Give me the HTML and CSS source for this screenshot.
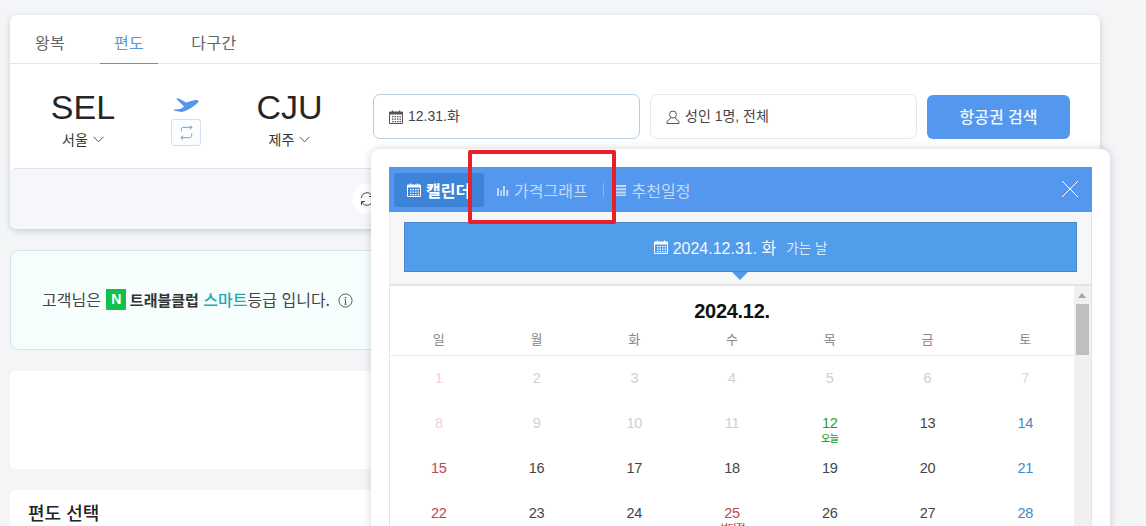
FILE: index.html
```html
<!DOCTYPE html>
<html lang="ko">
<head>
<meta charset="utf-8">
<title>항공권 검색</title>
<link rel="stylesheet" href="styles.css">
</head>
<body>
<svg class="defs" width="0" height="0" aria-hidden="true">
  <symbol id="cal" viewBox="0 0 14 14">
    <path d="M3.500 0.500v2M10.500 0.500v2" fill="none" stroke="currentColor" stroke-width="1.200"/>
    <path d="M0.500 2h13v11.500h-13z" fill="none" stroke="currentColor"/>
    <path d="M1 2h12v2.500H1z" fill="currentColor"/>
    <path d="M3 6h1.500v1.200H3zM5.500 6H7v1.200H5.500zM8 6h1.500v1.200H8zM10.500 6H12v1.200h-1.500zM3 8.500h1.500v1.200H3zM5.500 8.500H7v1.200H5.500zM8 8.500h1.500v1.200H8zM10.500 8.500H12v1.200h-1.500zM3 11h1.500v1.200H3zM5.500 11H7v1.200H5.500zM8 11h1.500v1.200H8zM10.500 11H12v1.200h-1.500z" fill="currentColor"/>
  </symbol>
  <symbol id="chev" viewBox="0 0 11 7">
    <path d="M0.500 0.800L5.500 5.800L10.500 0.800" fill="none" stroke="currentColor"/>
  </symbol>
</svg>

<main class="page">
  <section class="search-card">
    <nav class="tabs">
      <span class="tab">왕복</span>
      <span class="tab tab-active">편도</span>
      <span class="tab tab-multi">다구간</span>
    </nav>
    <div class="search-row">
      <div class="city city-from">
        <div class="code">SEL</div>
        <div class="city-name">서울 <svg class="chev"><use href="#chev"/></svg></div>
      </div>
      <div class="route">
        <svg class="plane" viewBox="0 0 26 15" width="26" height="15"><path d="M3 0.500L6 0.500L13 4.500L22 2C25 1.500 26.500 3 25 4.500C21 8.500 14 13 8.500 14L0.500 12.500L1.500 11.500L7.500 11L11 8.500z" fill="#5595ec"/></svg>
        <div class="swap">
          <svg viewBox="0 0 18 16" width="17" height="15"><path d="M3.500 7V4.500C3.500 3 4.500 2.500 6 2.500H15M12.500 0.500L15 2.500L12.500 4.500M14.500 9V11.500C14.500 13 13.500 13.500 12 13.500H3M5.500 11.500L3 13.500L5.500 15.500" fill="none" stroke="#5f9fe0" stroke-width="1"/></svg>
        </div>
      </div>
      <div class="city city-to">
        <div class="code">CJU</div>
        <div class="city-name">제주 <svg class="chev"><use href="#chev"/></svg></div>
      </div>
      <div class="field field-date"><svg class="field-icon"><use href="#cal"/></svg><span class="field-text">12.31.화</span></div>
      <div class="field field-pax">
        <svg class="field-icon" viewBox="0 0 14 14"><circle cx="7" cy="4.500" r="3.500" fill="none" stroke="currentColor"/><path d="M5 8L1 11.500V13.500H13V11.500L9 8" fill="none" stroke="currentColor"/></svg>
        <span class="field-text">성인 1명, 전체</span>
      </div>
      <div class="search-btn"><span class="field-text">항공권 검색</span></div>
    </div>
    <div class="search-foot">
      <span class="reset">
        <svg viewBox="0 0 16 16" width="16" height="16"><path d="M2.500 7A5.500 5.500 0 0 1 13 5M13.500 9A5.500 5.500 0 0 1 3 11M13.500 2v3.500H10M2.500 14v-3.500H6" fill="none" stroke="#444" stroke-width="1"/></svg>
      </span>
    </div>
  </section>

  <section class="grade">
    <p class="grade-text">고객님은 <span class="n-badge">N</span> <b class="club">트래블클럽</b> <b class="smart">스마트</b>등급 입니다.</p>
    <svg class="info" viewBox="0 0 16 16" width="15" height="15"><circle cx="8" cy="8" r="7" fill="none" stroke="#555"/><path d="M8 7v5M6.800 12h2.400M7 7h1" fill="none" stroke="#555"/><circle cx="8" cy="4.800" r="0.900" fill="#555"/></svg>
  </section>

  <section class="blank-card"></section>

  <section class="select-card">
    <h2 class="select-title">편도 선택</h2>
  </section>
</main>

<aside class="popup">
  <div class="popup-inner">
    <header class="popup-head">
      <span class="ptab ptab-active"><svg class="ptab-icon"><use href="#cal"/></svg>캘린더</span>
      <span class="ptab ptab-graph">
        <svg class="ptab-icon-sm" viewBox="0 0 12 12"><path d="M0 4h2v8H0zM3.300 6.500h1.700V12H3.300zM6 2h2v10H6zM9.300 6h2v6h-2z" fill="currentColor"/></svg>가격그래프
      </span>
      <span class="sep"></span>
      <span class="ptab ptab-plan">
        <svg class="ptab-icon-sm" viewBox="0 0 12 12"><path d="M0 1h11v2H0zM0 4.300h11v2H0zM0 7.600h11v2H0zM0 10.500h11v1.500H0z" fill="currentColor"/></svg>추천일정
      </span>
      <svg class="close" viewBox="0 0 18 18" width="18" height="18"><path d="M1 1L17 17M17 1L1 17" stroke="#fff" stroke-width="1" fill="none"/></svg>
    </header>
    <div class="date-band">
      <div class="date-bar">
        <svg class="date-icon"><use href="#cal"/></svg>
        <span class="date-main">2024.12.31. 화</span>
        <span class="date-sub">가는 날</span>
      </div>
    </div>
    <div class="cal-wrap">
      <div class="cal">
        <div class="cal-title">2024.12.</div>
        <div class="week">
          <span>일</span><span>월</span><span>화</span><span>수</span><span>목</span><span>금</span><span>토</span>
        </div>
        <div class="days">
          <span class="d sun off">1</span><span class="d off">2</span><span class="d off">3</span><span class="d off">4</span><span class="d off">5</span><span class="d off">6</span><span class="d sat off">7</span>
          <span class="d sun off">8</span><span class="d off">9</span><span class="d off">10</span><span class="d off">11</span><span class="d today">12<small>오늘</small></span><span class="d">13</span><span class="d sat">14</span>
          <span class="d sun">15</span><span class="d">16</span><span class="d">17</span><span class="d">18</span><span class="d">19</span><span class="d">20</span><span class="d sat">21</span>
          <span class="d sun">22</span><span class="d">23</span><span class="d">24</span><span class="d sun">25<small>성탄절</small></span><span class="d">26</span><span class="d">27</span><span class="d sat">28</span>
        </div>
      </div>
      <div class="scrollbar"><i class="arrow"></i><i class="thumb"></i></div>
    </div>
  </div>
</aside>

<div class="annot"></div>
</body>
</html>
```

FILE: styles.css
```css
* { box-sizing: border-box; }
html, body { margin: 0; height: 526px; overflow: hidden; }
body {
  background: #f3f5f7;
  font-family: "Noto Sans CJK KR", "Liberation Sans", sans-serif;
  color: #333;
  position: relative;
}
.defs { position: absolute; }

.page { width: 1090px; margin-left: 10px; padding-top: 15px; display: flex; flex-direction: column; }

.search-card {
  height: 214px;
  background: #fff;
  border-radius: 7px;
  box-shadow: 0 2px 6px rgba(60, 70, 90, .22);
  display: flex;
  flex-direction: column;
  overflow: hidden;
}
.tabs { height: 49px; flex: none; display: flex; gap: 21px; border-bottom: 1px solid #e4e7eb; padding-left: 11px; }
.tab { width: 58px; padding-top: 15px; text-align: center; font-size: 16px; line-height: 24px; color: #666; height: 49px; letter-spacing: .4px; }
.tab-multi { width: 70px; }
.tab-active { color: #5b96d4; border-bottom: 1px solid #5b96d4; }

.search-row { height: 104px; flex: none; display: flex; align-items: flex-start; position: relative; }
.city { text-align: center; flex: none; padding-top: 25px; }
.city-from { width: 146px; }
.city-to { width: 145px; }
.code { font-family: "Liberation Sans", sans-serif; font-size: 34px; line-height: 36px; color: #262626; }
.city-name { font-size: 14px; line-height: 20px; margin-top: 4px; color: #333; display: flex; justify-content: center; align-items: center; gap: 5px; }
.chev { width: 11px; height: 7px; color: #555; }
.route { width: 44px; margin: 0 9px 0 8px; flex: none; padding-top: 34px; display: flex; flex-direction: column; align-items: center; }
.plane { display: block; margin-bottom: 6px; }
.swap { width: 30px; height: 27px; border: 1px solid #cfe0f1; border-radius: 3px; background: #fbfdff; display: flex; align-items: center; justify-content: center; }
.field {
  flex: none;
  margin-top: 30px;
  height: 45px;
  border: 1px solid #e8e8ea;
  border-radius: 7px;
  display: flex;
  align-items: center;
  padding-left: 15px;
  font-family: "Liberation Sans", "Noto Sans CJK KR", sans-serif;
  font-size: 14px;
  color: #444;
}
.field-text { padding-bottom: 3px; }
.field-date { width: 267px; margin-left: 11px; border-color: #b7cde0; }
.field-pax { width: 267px; margin-left: 10px; }
.field-icon { width: 14px; height: 14px; margin-right: 5px; color: #555; }
.search-btn {
  flex: none;
  margin: 31px 0 0 10px;
  width: 143px;
  height: 44px;
  background: #5398ee;
  border-radius: 6px;
  color: #f2f7fd;
  font-size: 16px;
  font-weight: 500;
  display: flex;
  align-items: center;
  justify-content: center;
}
.search-foot {
  flex: 1;
  background: #f5f7fb;
  border-top: 1px solid #dfe3e8;
  border-radius: 6px 6px 0 0;
  position: relative;
}
.reset {
  position: absolute;
  left: 342px;
  top: 15px;
  width: 30px;
  height: 30px;
  border-radius: 50%;
  background: #fff;
  display: flex;
  align-items: center;
  justify-content: center;
}

.grade {
  margin-top: 21px;
  height: 100px;
  background: #f6fefe;
  border: 1px solid #d3e6e6;
  border-radius: 9px;
  padding: 0 0 2px 31px;
  display: flex;
  align-items: center;
  gap: 8px;
  font-size: 16px;
  color: #444;
}
.grade-text { margin: 0; line-height: 22px; }
.n-badge {
  display: inline-block;
  width: 20px;
  height: 21px;
  margin: 0 -1px 0 1px;
  vertical-align: 2px;
  background: #11c04c;
  color: #fff;
  text-align: center;
  font: bold 14px/21px "Liberation Sans", sans-serif;
}
.club { color: #333; font-weight: 700; font-size: 15px; }
.smart { color: #1ca9b8; font-weight: 500; }
.info { margin-top: 2px; }

.blank-card { margin-top: 21px; height: 98px; background: #fff; border-radius: 5px; }
.select-card { margin-top: 21px; height: 60px; background: #fff; border-radius: 6px; padding: 0 18px; }
.select-title { margin: 10px 0 0; font-size: 18px; line-height: 24px; font-weight: 500; color: #222; }

.popup {
  position: absolute;
  left: 371px;
  top: 149px;
  width: 739px;
  height: 420px;
  padding: 18px;
  background: #fff;
  border-radius: 9px;
  box-shadow: 0 0 8px rgba(50, 60, 80, .22);
}
.popup-inner { width: 703px; }
.popup-head {
  height: 45px;
  background: #5398ee;
  display: flex;
  align-items: center;
  padding-left: 5px;
  position: relative;
}
.ptab { display: flex; align-items: center; font-size: 16px; color: #c5d8f6; height: 34px; }
.ptab-active {
  width: 90px;
  padding-left: 13px;
  background: #3d84d8;
  border-radius: 3px;
  color: #fff;
  font-weight: 700;
}
.ptab-icon { width: 14px; height: 14px; margin-right: 5px; }
.ptab-icon-sm { width: 12px; height: 12px; margin-right: 5px; }
.ptab-graph { margin-left: 13px; }
.sep { width: 1px; height: 14px; background: #8ab5ed; margin: 0 11px 0 15px; }
.close { position: absolute; right: 13px; top: 13px; }

.date-band { height: 74px; background: #f5f7f9; padding: 10px 14px 0; border-bottom: 2px solid #e2e4e6; border-left: 1px solid #eceef0; border-right: 1px solid #e2e4e6; }
.date-bar {
  height: 50px;
  background: #529cec;
  border: 1px solid #4a87c4;
  color: #fff;
  display: flex;
  align-items: center;
  justify-content: center;
  position: relative;
}
.date-bar::after {
  content: "";
  position: absolute;
  left: 327px;
  bottom: -9px;
  border-left: 8px solid transparent;
  border-right: 8px solid transparent;
  border-top: 8px solid #529cec;
}
.date-icon { width: 14px; height: 14px; margin-right: 5px; }
.date-main { font: 16px "Liberation Sans", "Noto Sans CJK KR", sans-serif; color: #f3f8fe; }
.date-sub { font-size: 13.500px; margin-left: 10px; color: #dbe9fa; }

.cal-wrap { display: flex; height: 300px; border-left: 1px solid #e2e4e6; border-right: 1px solid #e2e4e6; }
.cal { width: 684px; flex: none; }
.cal-title { height: 38px; padding-top: 12px; text-align: center; font: bold 20px/26px "Liberation Sans", sans-serif; color: #111; letter-spacing: -.3px; }
.week { height: 32px; display: grid; grid-template-columns: repeat(7, 1fr); border-bottom: 1px solid #eceeef; text-align: center; font-size: 13px; line-height: 30px; color: #888; }
.days { display: grid; grid-template-columns: repeat(7, 1fr); grid-auto-rows: 45px; }
.d { position: relative; text-align: center; padding-top: 11px; font: 14.500px/22px "Liberation Sans", sans-serif; color: #444; letter-spacing: -.3px; }
.d small { position: absolute; left: 0; right: 0; top: 31px; font: 500 10px/12px "Noto Sans CJK KR", sans-serif; letter-spacing: -.5px; }
.sun { color: #c0484c; }
.sat { color: #3f8bc8; }
.today { color: #1aa32e; }
.off { color: #d0d0d0; }
.sun.off { color: #f1d4d4; }
.sat.off { color: #c9deef; }

.scrollbar { flex: 1; background: #f0f0f0; position: relative; }
.arrow { position: absolute; left: 4px; top: 7px; border-left: 4px solid transparent; border-right: 4px solid transparent; border-bottom: 5px solid #a3a3a3; }
.thumb { position: absolute; left: 2px; top: 18px; width: 13px; height: 51px; background: #bfbfbf; }

.annot {
  position: absolute;
  left: 468px;
  top: 150px;
  width: 148px;
  height: 74px;
  border: 4px solid #e8202a;
  border-radius: 2px;
}
```
